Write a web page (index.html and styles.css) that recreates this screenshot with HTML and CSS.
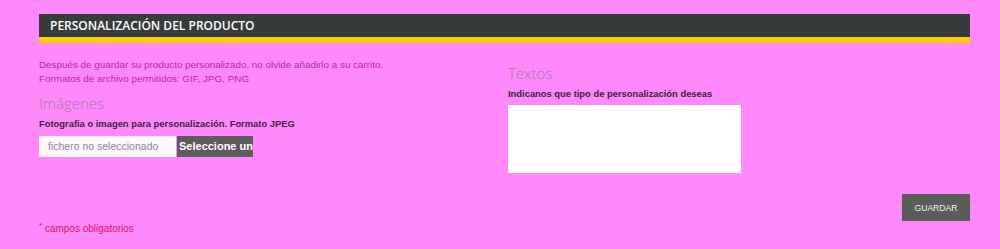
FILE: index.html
```html
<!DOCTYPE html>
<html lang="es">
<head>
<meta charset="utf-8">
<title>Personalización del producto</title>
<link rel="stylesheet" href="styles.css">
</head>
<body>
<div class="page">
  <h3 class="page-heading">Personalización del producto</h3>
  <div class="cols">
    <div class="col col-left">
      <p class="info">Después de guardar su producto personalizado, no olvide añadirlo a su carrito.<br>Formatos de archivo permitidos: GIF, JPG, PNG</p>
      <h4 class="sub">Imágenes</h4>
      <label class="lbl">Fotografia o imagen para personalización. Formato JPEG</label>
      <div class="file">
        <span class="file-name">fichero no seleccionado</span><span class="file-btn">Seleccione un</span>
      </div>
    </div>
    <div class="col col-right">
      <h4 class="sub sub-right">Textos</h4>
      <label class="lbl">Indicanos que tipo de personalización deseas</label>
      <div class="textarea"></div>
    </div>
  </div>
  <div class="actions">
    <button class="btn">Guardar</button>
  </div>
  <p class="req"><sup>*</sup> campos obligatorios</p>
</div>
</body>
</html>
```

FILE: styles.css
```css
html, body {
  margin: 0;
  padding: 0;
  background: #fe89fb;
}
body {
  font-family: "Liberation Sans", Arial, sans-serif;
  font-size: 10px;
}
.page {
  padding: 14px 30px 0 39px;
}
.page-heading {
  margin: 0;
  height: 23px;
  line-height: 24px;
  padding: 0 0 0 11px;
  background: #383b3b;
  border-bottom: 6px solid #f7cf00;
  color: #fff;
  font-family: "Open Sans", sans-serif;
  font-weight: 600;
  font-size: 12px;
  text-transform: uppercase;
}
.cols {
  display: flex;
}
.col-left {
  width: 469px;
}
.col-right {
  flex: 1;
}
.info {
  margin: 15px 0 0;
  color: #c21fb3;
  font-size: 9.85px;
  line-height: 14px;
}
.sub {
  margin: 0;
  font-family: "Open Sans", sans-serif;
  font-weight: 300;
  font-size: 15px;
  line-height: 20px;
  color: #a77aa8;
}
.col-left .sub {
  margin-top: 7px;
}
.sub-right {
  margin-top: 20px;
}
.lbl {
  display: block;
  margin-top: 4px;
  font-weight: bold;
  font-size: 9.4px;
  color: #3b2340;
  line-height: 14px;
}
.col-left .lbl {
  margin-top: 4px;
}
.file {
  display: flex;
  margin-top: 5px;
  height: 21px;
}
.file-name {
  width: 128px;
  padding-left: 9px;
  background: #fcf8fc;
  color: #8c8c8c;
  font-size: 10.5px;
  line-height: 21px;
}
.file-btn {
  margin-left: 1px;
  width: 74px;
  background: #5e5b5e;
  color: #fff;
  font-weight: bold;
  font-size: 11px;
  line-height: 20px;
  padding-left: 2px;
  overflow: hidden;
  white-space: nowrap;
}
.textarea {
  margin-top: 4px;
  width: 233px;
  height: 68px;
  background: #fff;
}
.actions {
  display: flex;
  justify-content: flex-end;
  margin-top: 21px;
}
.btn {
  width: 68px;
  height: 27px;
  border: 0;
  padding: 0;
  background: #5a5c5a;
  color: #f2f2f2;
  font-family: "Liberation Sans", Arial, sans-serif;
  font-size: 8.6px;
  text-transform: uppercase;
}
.req {
  margin: 1px 0 0;
  color: #e2145e;
  font-size: 10px;
  line-height: 14px;
}
.req sup {
  font-size: 8px;
  vertical-align: 4px;
  line-height: 0;
}
```
